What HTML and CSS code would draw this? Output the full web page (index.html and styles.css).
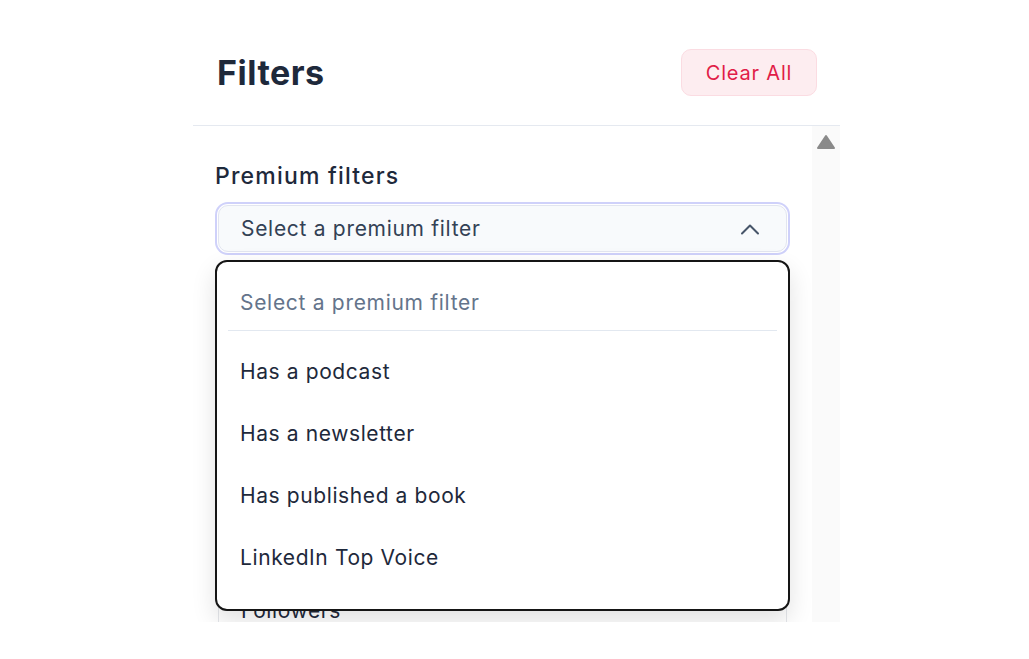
FILE: index.html
```html
<!DOCTYPE html>
<html lang="en">
<head>
    <meta charset="UTF-8">
    <meta name="viewport" content="width=device-width, initial-scale=1.0">
    <title>Filters</title>
    <link rel="stylesheet" href="styles.css">
</head>
<body>
    <div class="panel">
        <div class="panel-header">
            <h1>Filters</h1>
            <button class="clear-btn" type="button">Clear All</button>
        </div>

        <div class="panel-body">
            <div class="scroll-content">
                <label class="field-label">Premium filters</label>
                <div class="select-wrap">
                    <div class="select-box">
                        <span>Select a premium filter</span>
                        <svg class="chevron" width="20" height="12" viewBox="0 0 20 12">
                            <path d="M2 10.5 L10 2.5 L18 10.5" fill="none" stroke="#475569" stroke-width="2" stroke-linecap="round" stroke-linejoin="round"/>
                        </svg>
                    </div>

                    <ul class="dropdown">
                        <li class="dropdown-head">Select a premium filter</li>
                        <li>Has a podcast</li>
                        <li>Has a newsletter</li>
                        <li>Has published a book</li>
                        <li>LinkedIn Top Voice</li>
                    </ul>
                </div>

                <div class="other-filters">
                    <div class="row">Followers</div>
                </div>
            </div>

            <div class="scrollbar">
                <svg width="20" height="16" viewBox="0 0 20 16">
                    <path d="M10 2 L18 14 L2 14 Z" fill="#8a8a8a" stroke="#8a8a8a" stroke-width="2" stroke-linejoin="round"/>
                </svg>
            </div>
        </div>
    </div>
</body>
</html>
```

FILE: styles.css
```css
body {
    font-family: Inter, "Open Sans", sans-serif;
    margin: 0;
    background-color: #ffffff;
    color: #1e293b;
}
.panel {
    width: 647px;
    margin-left: 193px;
}
.panel-header {
    display: flex;
    justify-content: space-between;
    align-items: center;
    padding: 49px 23px 29px 24px;
    border-bottom: 1px solid #e5e9f0;
}
.panel-header h1 {
    margin: 0;
    font-size: 34px;
    font-weight: 700;
    letter-spacing: 0.5px;
    color: #1e293b;
}
.clear-btn {
    height: 47px;
    width: 136px;
    background-color: #fdedf0;
    border: 1px solid #fbdce2;
    border-radius: 10px;
    color: #e11d48;
    font-family: inherit;
    font-size: 20px;
    letter-spacing: 0.8px;
    cursor: pointer;
}
.panel-body {
    display: flex;
    height: 496px;
    overflow: hidden;
}
.scroll-content {
    flex: 1;
    padding: 35px 22px 0 22px;
}
.field-label {
    display: block;
    font-size: 23px;
    font-weight: 500;
    line-height: 30px;
    letter-spacing: 1.2px;
    color: #1e293b;
    margin-bottom: 14px;
}
.select-wrap {
    position: relative;
}
.select-box {
    display: flex;
    justify-content: space-between;
    align-items: center;
    height: 45px;
    margin: 0 3px;
    padding: 0 26px 0 22px;
    background-color: #f8fafc;
    border: 1px solid #e2e5f0;
    border-radius: 10px;
    box-shadow: 0 0 0 1px #ffffff, 0 0 0 3px #cfd1fa;
    font-size: 21px;
    letter-spacing: 0.7px;
    color: #334155;
}
.dropdown {
    position: absolute;
    top: 55px;
    left: 0;
    right: 0;
    z-index: 2;
    list-style: none;
    margin: 0;
    padding: 12px 11px 21px 11px;
    background-color: #ffffff;
    border: 2px solid #151515;
    border-radius: 12px;
    box-shadow: 0 10px 25px rgba(0, 0, 0, 0.12);
}
.dropdown li {
    height: 62px;
    display: flex;
    align-items: center;
    padding: 0 12px;
    font-size: 21px;
    letter-spacing: 0.6px;
    color: #1e293b;
}
.dropdown .dropdown-head {
    height: 56px;
    color: #64748b;
    letter-spacing: 0.7px;
    border-bottom: 1px solid #e2e8f0;
    margin-bottom: 9px;
}
.other-filters {
    margin: 16px 3px 0 3px;
    padding-top: 310px;
    border: 1px solid #e5e7eb;
    border-radius: 10px;
}
.other-filters .row {
    height: 62px;
    display: flex;
    align-items: center;
    padding: 0 22px;
    font-size: 21px;
    letter-spacing: 0.6px;
    color: #1e293b;
}
.scrollbar {
    width: 28px;
    background-color: #fafafa;
    display: flex;
    justify-content: center;
    padding-top: 8px;
    align-items: flex-start;
}
```
